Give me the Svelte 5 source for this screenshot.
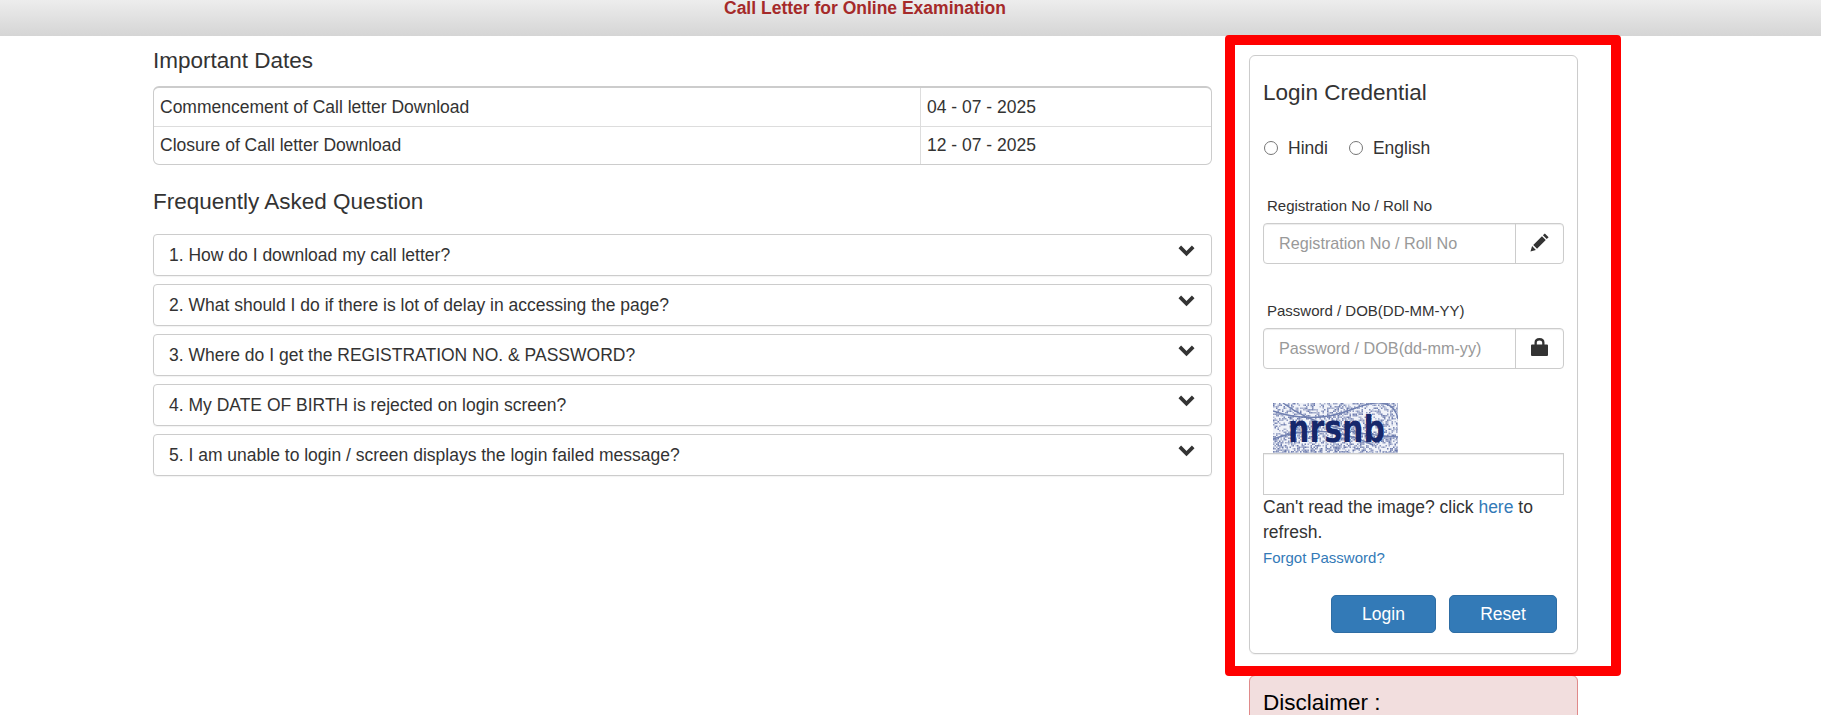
<script>
	const dates = [
		{ label: 'Commencement of Call letter Download', value: '04 - 07 - 2025' },
		{ label: 'Closure of Call letter Download', value: '12 - 07 - 2025' }
	];

	const faqs = [
		'1. How do I download my call letter?',
		'2. What should I do if there is lot of delay in accessing the page?',
		'3. Where do I get the REGISTRATION NO. & PASSWORD?',
		'4. My DATE OF BIRTH is rejected on login screen?',
		'5. I am unable to login / screen displays the login failed message?'
	];

	// speckle for the captcha picture, seeded so that it stays the same
	let seed = 7;
	function rnd() {
		seed = (seed * 16807) % 2147483647;
		return seed / 2147483647;
	}
	const speckle = [];
	for (let y = 0; y < 50; y += 1.5) {
		for (let x = 0; x < 125; x += 1.5) {
			if (rnd() < 0.5) speckle.push({ x, y, o: 0.35 + rnd() * 0.6 });
		}
	}
</script>

<div class="page">
	<header class="topbar">
		<h1>Call Letter for Online Examination</h1>
	</header>

	<main class="columns">
		<section class="left">
			<h2>Important Dates</h2>
			<table>
				<tbody>
					{#each dates as d}
						<tr>
							<td class="name">{d.label}</td>
							<td>{d.value}</td>
						</tr>
					{/each}
				</tbody>
			</table>

			<h2 class="faq-title">Frequently Asked Question</h2>
			<div class="faq">
				{#each faqs as q}
					<div class="faq-item">
						<span>{q}</span>
						<svg class="chev" viewBox="0 0 16 12" width="17" height="12">
							<path d="M0 3.2 2.6 0.6 8 6 13.4 0.6 16 3.2 8 11.2Z" fill="#333" />
						</svg>
					</div>
				{/each}
			</div>
		</section>

		<aside class="side">
			<div class="card">
				<h3>Login Credential</h3>
				<div class="radios">
					<label><input type="radio" name="lang" /> Hindi</label>
					<label><input type="radio" name="lang" /> English</label>
				</div>

				<label class="field-label" for="reg">Registration No / Roll No</label>
				<div class="input-group">
					<input id="reg" type="text" placeholder="Registration No / Roll No" />
					<span class="addon">
						<svg viewBox="0 0 20 20" width="19" height="19">
							<path d="M0.5 19.5 2.2 13.8 6.2 17.8Z M3.4 12.6 12.6 3.4 16.6 7.4 7.4 16.6Z M13.6 2.4 15.6 0.4 19.6 4.4 17.6 6.4Z" fill="#333" />
						</svg>
					</span>
				</div>

				<label class="field-label second" for="pwd">Password / DOB(DD-MM-YY)</label>
				<div class="input-group">
					<input id="pwd" type="text" placeholder="Password / DOB(dd-mm-yy)" />
					<span class="addon">
						<svg viewBox="0 0 17 18" width="17" height="18">
							<path d="M0 7.5Q0 6.5 1 6.5H3.5V4.5Q3.5 0 8.5 0T13.5 4.5V6.5H16Q17 6.5 17 7.5V17Q17 18 16 18H1Q0 18 0 17Z M5.8 6.5H11.2V4.5Q11.2 2.4 8.5 2.4T5.8 4.5Z" fill="#333" fill-rule="evenodd" />
						</svg>
					</span>
				</div>

				<svg class="captcha" viewBox="0 0 125 50" width="125" height="50">
					<rect width="125" height="50" fill="#f1f3f9" />
					{#each speckle as s}
						<rect x={s.x} y={s.y} width="1.5" height="1.5" fill="#6070a6" opacity={s.o} />
					{/each}
					<path d="M0 8Q40 22 80 6T125 16M10 0Q50 30 125 34M0 36Q50 18 100 42" fill="none" stroke="#6f7fb0" stroke-width="1.4" />
					<text x="63.5" y="39" text-anchor="middle" textLength="97" lengthAdjust="spacingAndGlyphs" class="captcha-text">nrsnb</text>
				</svg>
				<input class="captcha-input" type="text" />

				<p class="hint">Can't read the image? click <a href="#top">here</a> to refresh.</p>
				<a class="forgot" href="#top">Forgot Password?</a>

				<div class="actions">
					<button class="login">Login</button>
					<button class="reset">Reset</button>
				</div>
			</div>

			<div class="disclaimer">Disclaimer :</div>

			<div class="highlight"></div>
		</aside>
	</main>
</div>

<style>
	:global(body) {
		margin: 0;
		font-family: 'Liberation Sans', Arial, sans-serif;
		font-size: 17.5px;
		color: #333;
		background: #fff;
	}

	.page {
		height: 715px;
		overflow: hidden;
	}

	.topbar {
		height: 36px;
		box-sizing: border-box;
		padding-right: 91px;
		background: linear-gradient(#ededed, #d5d5d5);
		text-align: center;
	}

	.topbar h1 {
		margin: 0;
		font-size: 17.5px;
		line-height: 16px;
		font-weight: bold;
		color: #a52a2a;
	}

	.columns {
		display: grid;
		grid-template-columns: 1059px 329px;
		column-gap: 37px;
		padding: 19px 0 0 153px;
	}

	.left {
		margin-top: -6px;
	}

	h2 {
		margin: 0;
		font-size: 22.5px;
		line-height: 23px;
		font-weight: 500;
	}

	table {
		width: 100%;
		margin-top: 14px;
		border-collapse: separate;
		border-spacing: 0;
		border: 1px solid #ccc;
		border-top-width: 2px;
		border-radius: 6px;
	}

	td {
		padding: 0 6px;
		height: 38px;
		border-top: 1px solid #ddd;
	}

	tr:first-child td {
		border-top: 0;
	}

	tr:last-child td {
		height: 37px;
	}

	td.name {
		width: 754px;
		border-right: 1px solid #ddd;
	}

	.faq-title {
		margin-top: 25px;
	}

	.faq {
		margin-top: 21px;
		display: flex;
		flex-direction: column;
		gap: 8px;
	}

	.faq-item {
		display: flex;
		justify-content: space-between;
		height: 42px;
		box-sizing: border-box;
		padding: 10px 16px 0 15px;
		border: 1px solid #ccc;
		border-radius: 4px;
		box-shadow: 0 1px 1px rgba(0, 0, 0, 0.05);
	}

	.side {
		position: relative;
		height: 660px;
	}

	.card {
		box-sizing: border-box;
		height: 599px;
		padding: 0 13px;
		border: 1px solid #ccc;
		border-radius: 6px;
		box-shadow: 0 1px 1px rgba(0, 0, 0, 0.05);
	}

	h3 {
		margin: 0;
		padding-top: 25px;
		font-size: 22.5px;
		line-height: 24px;
		font-weight: 500;
	}

	.radios {
		display: flex;
		gap: 20px;
		margin-top: 31px;
		height: 24px;
		align-items: center;
	}

	.radios label {
		display: flex;
		align-items: center;
		gap: 10px;
	}

	.radios input {
		margin: 0 0 0 1px;
		width: 14px;
		height: 14px;
	}

	.field-label {
		display: block;
		margin: 38px 0 9px 4px;
		font-size: 15px;
		line-height: 16px;
	}

	.field-label.second {
		margin-top: 39px;
	}

	.input-group {
		display: flex;
		height: 41px;
		box-sizing: border-box;
		border: 1px solid #ccc;
		border-radius: 4px;
		box-shadow: inset 0 1px 1px rgba(0, 0, 0, 0.075);
	}

	.input-group input {
		flex: 1;
		min-width: 0;
		padding: 0 15px;
		border: 0;
		background: transparent;
		font: inherit;
		font-size: 16.2px;
	}

	input::placeholder {
		color: #999;
		opacity: 1;
	}

	.addon {
		display: flex;
		align-items: center;
		justify-content: center;
		width: 48px;
		padding-bottom: 3px;
		box-sizing: border-box;
		border-left: 1px solid #ccc;
	}

	.captcha {
		display: block;
		margin: 34px 0 0 10px;
	}

	.captcha-text {
		font-family: 'DejaVu Sans', sans-serif;
		font-size: 38px;
		font-weight: bold;
		fill: #16276b;
	}

	.captcha-input {
		display: block;
		box-sizing: border-box;
		width: 301px;
		height: 42px;
		padding: 0 8px;
		border: 1px solid #ccc;
		border-radius: 0;
		box-shadow: inset 0 1px 1px rgba(0, 0, 0, 0.075);
	}

	.hint {
		margin: 0;
		line-height: 25px;
	}

	a {
		color: #337ab7;
		text-decoration: none;
	}

	.forgot {
		display: block;
		margin-top: 5px;
		font-size: 15px;
		line-height: 16px;
	}

	.actions {
		display: flex;
		justify-content: flex-end;
		gap: 13px;
		margin-top: 29px;
		padding-right: 7px;
	}

	.actions button {
		height: 38px;
		border: 1px solid #2e6da4;
		border-radius: 5px;
		background: #337ab7;
		color: #fff;
		font: inherit;
	}

	.login {
		width: 105px;
	}

	.reset {
		width: 108px;
	}

	.disclaimer {
		margin-top: 21px;
		height: 60px;
		padding: 15px 13px;
		font-size: 22.5px;
		line-height: 24px;
		color: #000;
		background: #f2dede;
		border: 1px solid #e08a8a;
		border-radius: 6px;
	}

	.highlight {
		position: absolute;
		left: -24px;
		top: -20px;
		width: 376px;
		height: 621px;
		border: 10px solid #f00;
		border-radius: 4px;
		pointer-events: none;
	}
</style>
